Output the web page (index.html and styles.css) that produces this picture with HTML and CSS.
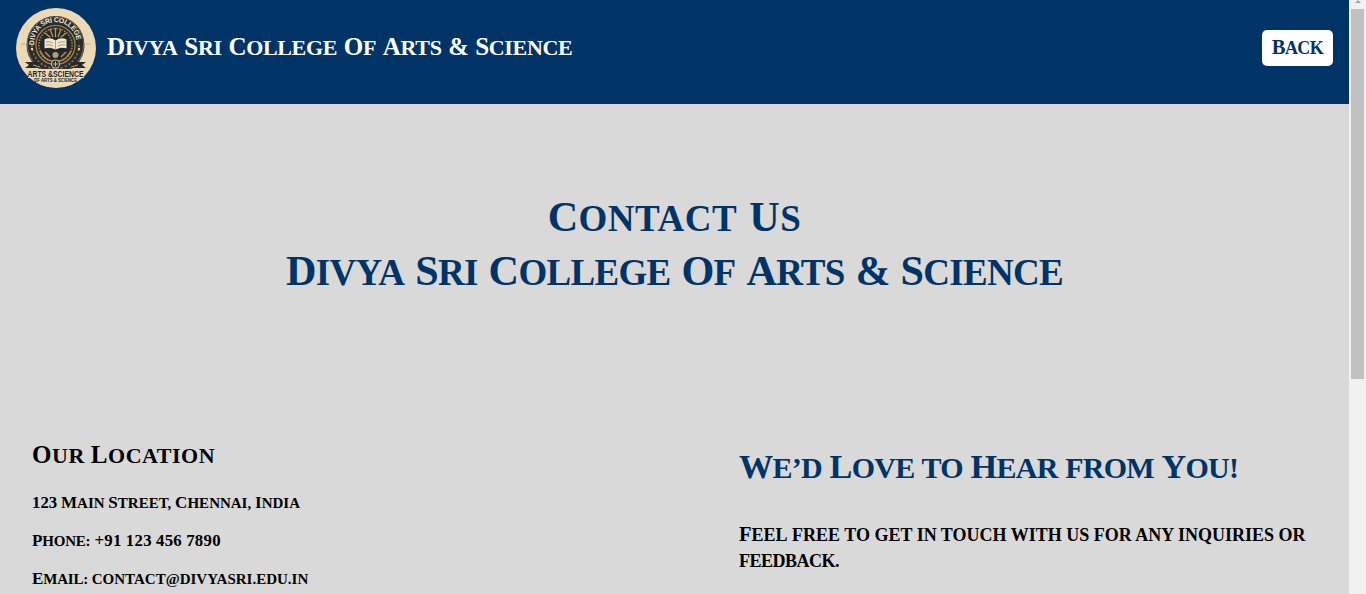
FILE: index.html
```html
<!DOCTYPE html>
<html lang="en">
<head>
<meta charset="utf-8">
<title>Contact Us - Divya Sri College</title>
<link rel="stylesheet" href="styles.css">
</head>
<body>
<div class="page">
<header class="bar">
<svg class="logo" viewBox="0 0 80 80" role="img" aria-label="Divya Sri College logo">
<defs><path id="arc" d="M18.500 39A21.300 21.300 0 1 1 60.500 39"/></defs>
<circle cx="40" cy="40" r="40" fill="#ebd9b8"/>
<circle cx="39.500" cy="37" r="29" fill="#2b2d30"/>
<circle cx="39.500" cy="37" r="28" fill="none" stroke="#a58d65" stroke-width=".7"/>
<circle cx="39.500" cy="37" r="23.500" fill="none" stroke="#927246" stroke-width="1.600" stroke-dasharray="2 2.200"/>
<path d="M15 37A24.500 24.500 0 0 1 64 37" fill="none" stroke="#2b2d30" stroke-width="6.500"/>
<circle cx="39.500" cy="37" r="19.500" fill="#25282c" stroke="#a98752" stroke-width="1.200"/>
<circle cx="39.500" cy="37" r="16.600" fill="none" stroke="#987744" stroke-width="2" stroke-dasharray="1.500 1.300"/>
<text class="seal"><textPath href="#arc" startOffset="2" textLength="65">DIVYA SRI COLLEGE</textPath></text>
<path d="M39.500 20v9M34 21l3 8M45 21l-3 8M29 25l6 5M50 25l-6 5" stroke="#c29a5c" stroke-width="1.200"/>
<path d="M28 31q6-3 11.500 1q5.500-4 11.500-1v10q-6-2-11.500 1q-5.500-3-11.500-1z" fill="#f1e7cf" stroke="#1f252c"/>
<path d="M39.500 32v10M30 34q4-1 7 1M30 37q4-1 7 1M42 35q4-2 7-1M42 38q4-2 7-1" fill="none" stroke="#958b77" stroke-width=".8"/>
<path d="M24 43q5 10 13 10M55 43q-5 10-13 10M29 44l5 5M50 44l-5 5" fill="none" stroke="#b48c51" stroke-width="1.500"/>
<circle cx="39.500" cy="47" r="3" fill="#b59d78"/><circle cx="39.500" cy="56" r="4" fill="#25282c" stroke="#cfba91" stroke-width="1.200"/>
<path d="M37 56h5M39.500 53.500v5" stroke="#cfba91"/>
<circle cx="16" cy="41" r="1.200" fill="#ead6af"/><circle cx="63" cy="41" r="1.200" fill="#ead6af"/>
<path d="M5 36h4M70 36h4" stroke="#cfac76"/>
<path d="M9 54h13l4 6H9l4-3zM70 54H57l-4 6h17l-4-3z" fill="#292827"/>
<path d="M17 57l7 2M62 57l-7 2" stroke="#ead6af" stroke-width=".7"/>
<path d="M12 61h56v9H12z" fill="#ebd9b8"/>
<text class="logo-main" x="11.500" y="69" textLength="56" lengthAdjust="spacingAndGlyphs">ARTS &amp;SCIENCE</text>
<text class="logo-sub" x="18" y="73.500" textLength="43" lengthAdjust="spacingAndGlyphs">OF ARTS &amp; SCIENCE</text>
</svg>
<div class="brand"><b>Divya</b> <b>Sri</b> <b>College</b> <b>Of</b> <b>Arts</b> <b class="num">&amp;</b> <b>Science</b></div>
<a class="back"><b>Back</b></a>
</header>
<main>
<h1 class="title"><span class="row first"><b>Contact</b> <b>Us</b></span><span class="row"><b>Divya</b> <b>Sri</b> <b>College</b> <b>Of</b> <b>Arts</b> <b class="num">&amp;</b> <b>Science</b></span></h1>
<div class="columns">
<section class="location">
<h2><b>Our</b> <b>Location</b></h2>
<p class="address"><b class="num">123</b> <b>Main</b> <b>Street,</b> <b>Chennai,</b> <b>India</b></p>
<p class="phone"><b class="label">Phone:</b> <b class="num">+91</b> <b class="num">123</b> <b class="num">456</b> <b class="num">7890</b></p>
<p class="email"><b class="label">Email:</b> contact@divyasri.edu.in</p>
</section>
<section class="message">
<h2><b>We’d</b> <b>Love</b> to <b>Hear</b> from <b>You!</b></h2>
<p><b>Feel</b> free to get in touch with us for any inquiries or<br><span class="tail">feedback.</span></p>
</section>
</div>
</main>
</div>
<aside class="scrollbar"><i class="arrow"></i><i class="thumb"></i></aside>
</body>
</html>
```
FILE: styles.css
```css
* { box-sizing: border-box; }
body { margin: 0; width: 1366px; height: 594px; overflow: hidden; display: flex; background: #d9d9d9; color: #000; font-family: "Liberation Serif", serif; font-weight: bold; }
.page { width: 1349px; height: 594px; overflow: hidden; }
h1, h2, p { margin: 0; font-weight: bold; }
.brand, .back, .title, .columns { text-transform: uppercase; white-space: nowrap; }
b { display: inline-block; line-height: 1; }
b::first-letter { font-size: 1.14em; line-height: 1; }
b.num { font-size: 1.12em; }
b.num::first-letter { font-size: 1em; }
.bar { height: 104px; background: #003366; color: #fff; display: flex; padding: 8px 16px; }
.logo { width: 80px; height: 80px; flex: none; overflow: visible; }
.seal { font: bold 7px "Liberation Sans", sans-serif; fill: #f2e6cc; }
.logo-main { font: bold 9.500px "Liberation Sans", sans-serif; fill: #252627; }
.logo-sub { font: bold 4.500px "Liberation Sans", sans-serif; fill: #252627; }
.brand { margin: 24px 0 0 11px; font-size: 22px; line-height: 32px; letter-spacing: -.35px; word-spacing: 1.6px; }
.back { margin: 22px 0 0 auto; width: 71px; height: 36px; border-radius: 5px; background: #fff; color: #003366; text-align: center; font-size: 18px; line-height: 36px; letter-spacing: -.6px; }
.title { padding-top: 88px; height: 314px; color: #003366; text-align: center; font-size: 37px; line-height: 54px; }
.row { display: block; height: 54px; letter-spacing: -.7px; word-spacing: 2.4px; }
.row.first { letter-spacing: .5px; }
.columns { display: flex; }
.location { width: 739px; padding: 21px 0 0 32px; font-size: 15px; line-height: 38px; }
.location p { height: 38px; }
.location h2 { font-size: 22px; line-height: 34px; height: 34px; margin-bottom: 11px; letter-spacing: .5px; }
.phone { letter-spacing: .3px; }
.label { letter-spacing: -.2px; }
.message { padding-top: 29px; font-size: 18px; line-height: 26px; }
.message h2 { color: #003366; font-size: 30px; line-height: 42px; height: 42px; margin-bottom: 33px; letter-spacing: -.7px; word-spacing: .7px; }
.tail { letter-spacing: -.5px; }
.scrollbar { width: 17px; height: 594px; background: #f1f1f1; padding: 0 2px; display: flex; flex-direction: column; align-items: center; }
.arrow { height: 3px; border: solid transparent; border-width: 0 3px 3px; border-bottom-color: #a3a3a3; margin-bottom: 6px; }
.thumb { width: 13px; height: 370px; background: #c1c1c1; }
```
